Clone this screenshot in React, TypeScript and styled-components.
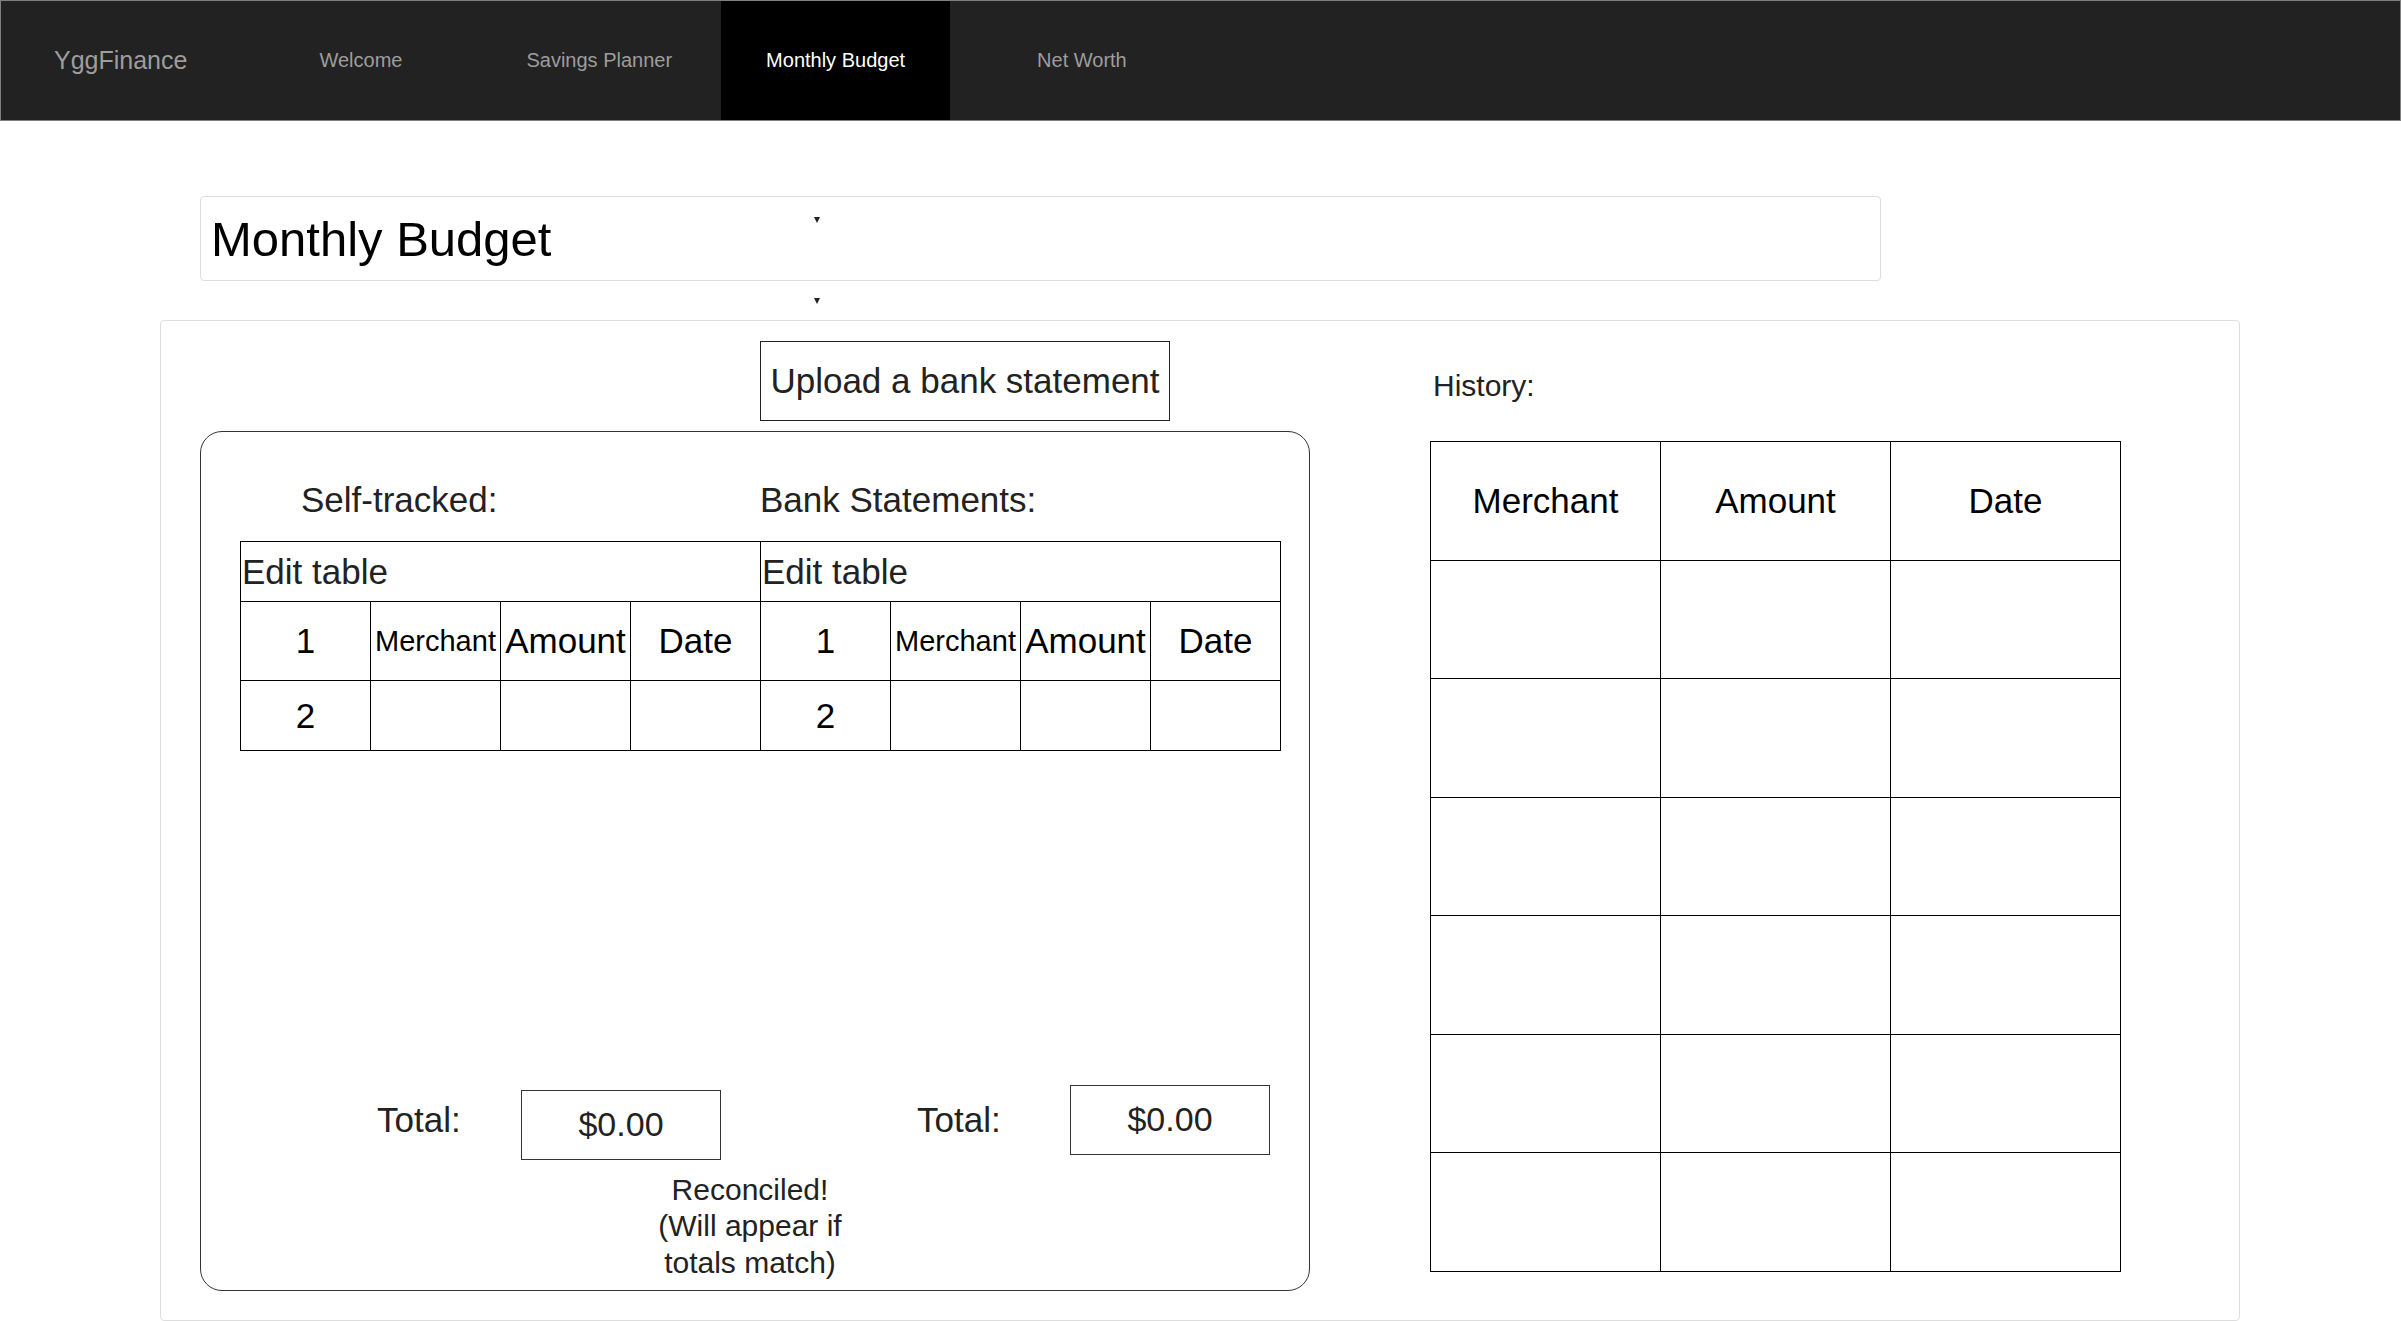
import React from "react";
import styled, { createGlobalStyle } from "styled-components";

const NAV_LINKS = [
  { label: "Welcome", space: 87 },
  { label: "Savings Planner", space: 34 },
  { label: "Monthly Budget", space: 4, active: true },
  { label: "Net Worth", space: 42 },
];

const SIDES = ["self", "bank"];
const HISTORY_ROWS = 6;

const GlobalStyle = createGlobalStyle`
  * { box-sizing: border-box; }
  html, body {
    margin: 0;
    padding: 0;
    background: #fff;
  }
  body {
    font-family: "Liberation Sans", Arial, sans-serif;
    color: #222;
    overflow: hidden;
  }
`;

const App = () => {
  return (
    <>
      <GlobalStyle />
      <Nav>
        <Brand>YggFinance</Brand>
        {NAV_LINKS.map((l) => (
          <NavLink key={l.label} $space={l.space} $active={l.active}>
            {l.label}
          </NavLink>
        ))}
      </Nav>

      <TitleCard>
        <Title>Monthly Budget</Title>
        <Caret $inset={262} />
      </TitleCard>
      <CaretRow>
        <Caret />
      </CaretRow>

      <Panel>
        <LeftColumn>
          <UploadRow>
            <UploadButton>Upload a bank statement</UploadButton>
          </UploadRow>
          <ReconBox>
            <Halves>
              <SideLabel $inset={61}>Self-tracked:</SideLabel>
              <SideLabel $inset={0}>Bank Statements:</SideLabel>
            </Halves>
            <Ledger>
              <tbody>
                <LedgerRow $h={60}>
                  {SIDES.map((s) => (
                    <EditCell key={s} colSpan={4}>
                      Edit table
                    </EditCell>
                  ))}
                </LedgerRow>
                <LedgerRow $h={79}>
                  {SIDES.map((s) => (
                    <React.Fragment key={s}>
                      <Cell>1</Cell>
                      <Cell $small>Merchant</Cell>
                      <Cell>Amount</Cell>
                      <Cell>Date</Cell>
                    </React.Fragment>
                  ))}
                </LedgerRow>
                <LedgerRow $h={70}>
                  {SIDES.map((s) => (
                    <React.Fragment key={s}>
                      <Cell>2</Cell>
                      <Cell />
                      <Cell />
                      <Cell />
                    </React.Fragment>
                  ))}
                </LedgerRow>
              </tbody>
            </Ledger>

            <TotalsRow>
              <TotalGroup $inset={137}>
                <TotalLabel $w={144}>Total:</TotalLabel>
                <TotalBox $drop={5}>$0.00</TotalBox>
              </TotalGroup>
              <TotalGroup $inset={157}>
                <TotalLabel $w={153}>Total:</TotalLabel>
                <TotalBox>$0.00</TotalBox>
              </TotalGroup>
            </TotalsRow>
            <Reconciled>
              <div>Reconciled!</div>
              <div>(Will appear if totals match)</div>
            </Reconciled>
          </ReconBox>
        </LeftColumn>

        <HistoryColumn>
          <HistoryLabel>History:</HistoryLabel>
          <HistoryTable>
            <thead>
              <tr>
                <HistoryCell as="th">Merchant</HistoryCell>
                <HistoryCell as="th">Amount</HistoryCell>
                <HistoryCell as="th">Date</HistoryCell>
              </tr>
            </thead>
            <tbody>
              {Array.from({ length: HISTORY_ROWS }).map((_, i) => (
                <tr key={i}>
                  <HistoryCell />
                  <HistoryCell />
                  <HistoryCell />
                </tr>
              ))}
            </tbody>
          </HistoryTable>
        </HistoryColumn>
      </Panel>
    </>
  );
};

const Nav = styled.nav`
  display: flex;
  align-items: stretch;
  height: 121px;
  padding-left: 53px;
  background: #222;
  border: 1px solid #808080;
`;
const Brand = styled.div`
  display: flex;
  align-items: center;
  font-size: 25px;
  color: #9d9d9d;
`;
const NavLink = styled.a<{ $space: number; $active?: boolean }>`
  display: flex;
  align-items: center;
  margin-left: ${(p) => p.$space}px;
  padding: 0 45px;
  font-size: 20px;
  color: ${(p) => (p.$active ? "#fff" : "#9d9d9d")};
  background: ${(p) => (p.$active ? "#000" : "transparent")};
  cursor: pointer;
`;

const TitleCard = styled.div`
  display: flex;
  align-items: center;
  width: 1681px;
  height: 85px;
  margin: 75px 0 0 200px;
  padding-left: 10px;
  border: 1px solid #ddd;
  border-radius: 4px;
`;
const Title = styled.h1`
  margin: 0;
  font-size: 49px;
  font-weight: 400;
  color: #000;
`;
const Caret = styled.span<{ $inset?: number }>`
  align-self: ${(p) => (p.$inset ? "flex-start" : "center")};
  width: 0;
  height: 0;
  margin: ${(p) => (p.$inset ? `20px 0 0 ${p.$inset}px` : "0")};
  border-left: 3px solid transparent;
  border-right: 3px solid transparent;
  border-top: 6px solid #222;
`;
const CaretRow = styled.div`
  display: flex;
  height: 39px;
  padding-left: 814px;
`;

const Panel = styled.section`
  display: grid;
  grid-template-columns: 1110px 691px;
  column-gap: 120px;
  width: 2080px;
  height: 1001px;
  margin-left: 160px;
  padding: 20px 0 0 39px;
  border: 1px solid #ddd;
  border-radius: 4px;
`;
const LeftColumn = styled.div`
  display: flex;
  flex-direction: column;
`;
const UploadRow = styled.div`
  display: flex;
  padding-left: 560px;
`;
const UploadButton = styled.button`
  width: 410px;
  height: 80px;
  padding: 0;
  border: 1px solid #222;
  background: #fff;
  font-family: inherit;
  font-size: 35px;
  color: #222;
`;
const ReconBox = styled.div`
  display: flex;
  flex-direction: column;
  height: 860px;
  margin-top: 10px;
  padding: 48px 29px 9px 39px;
  border: 1px solid #333;
  border-radius: 22px;
`;
const Halves = styled.div`
  display: grid;
  grid-template-columns: 520px 520px;
`;
const SideLabel = styled.div<{ $inset: number }>`
  padding-left: ${(p) => p.$inset}px;
  font-size: 35px;
  line-height: 40px;
`;
const Ledger = styled.table`
  width: 1041px;
  margin-top: 21px;
  border-collapse: collapse;
  table-layout: fixed;
`;
const LedgerRow = styled.tr<{ $h: number }>`
  height: ${(p) => p.$h}px;
`;
const EditCell = styled.td`
  padding: 0 1px;
  border: 1px solid #000;
  font-size: 35px;
  color: #222;
  text-align: left;
`;
const Cell = styled.td<{ $small?: boolean }>`
  padding: 0;
  border: 1px solid #000;
  font-size: ${(p) => (p.$small ? "29px" : "35px")};
  color: #000;
  text-align: center;
  white-space: nowrap;
`;

const TotalsRow = styled.div`
  display: grid;
  grid-template-columns: 520px 520px;
  height: 75px;
  margin-top: auto;
`;
const TotalGroup = styled.div<{ $inset: number }>`
  display: flex;
  align-items: flex-start;
  padding-left: ${(p) => p.$inset}px;
`;
const TotalLabel = styled.div<{ $w: number }>`
  width: ${(p) => p.$w}px;
  margin-top: 15px;
  font-size: 35px;
  line-height: 40px;
`;
const TotalBox = styled.div<{ $drop?: number }>`
  display: flex;
  align-items: center;
  justify-content: center;
  width: 200px;
  height: 70px;
  margin-top: ${(p) => p.$drop ?? 0}px;
  border: 1px solid #333;
  font-size: 34px;
`;
const Reconciled = styled.div`
  width: 220px;
  margin: 12px auto 0;
  padding-right: 20px;
  font-size: 30px;
  line-height: 36.5px;
  text-align: center;
`;

const HistoryColumn = styled.div`
  display: flex;
  flex-direction: column;
`;
const HistoryLabel = styled.div`
  margin-top: 27px;
  padding-left: 3px;
  font-size: 30px;
  line-height: 36px;
`;
const HistoryTable = styled.table`
  width: 691px;
  margin-top: 37px;
  border-collapse: collapse;
  table-layout: fixed;
`;
const HistoryCell = styled.td`
  height: 118.5px;
  padding: 0;
  border: 1px solid #000;
  font-size: 35px;
  font-weight: 400;
  color: #000;
  text-align: center;
`;

export default App;
